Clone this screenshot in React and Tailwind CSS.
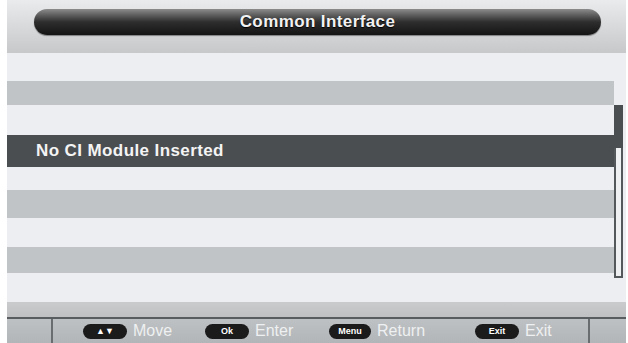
const rows = [
  { h: 'h-[28px]', tone: 'light' },
  { h: 'h-[24px]', tone: 'gray' },
  { h: 'h-[30px]', tone: 'light' },
  { h: 'h-[32px]', tone: 'dark', label: 'No CI Module Inserted' },
  { h: 'h-[23px]', tone: 'light' },
  { h: 'h-[28px]', tone: 'gray' },
  { h: 'h-[29px]', tone: 'light' },
  { h: 'h-[26px]', tone: 'gray' },
  { h: 'h-[29px]', tone: 'light' },
];

const toneClass = {
  light: 'bg-[#eceef1]',
  gray: 'bg-[#c1c4c7]',
  dark: 'bg-[#4b4e51]',
};

function Key({ label, width }) {
  return (
    <span
      className={`${width} h-[15px] rounded-full bg-[#1b1b1b] flex items-center justify-center text-[9px] font-bold text-white leading-none`}
    >
      {label}
    </span>
  );
}

function Hint({ keyLabel, keyWidth, text, width }) {
  return (
    <div className={`${width} flex items-center gap-[6px]`}>
      <Key label={keyLabel} width={keyWidth} />
      <span className="text-[16px] text-[#eef0f1] leading-none">{text}</span>
    </div>
  );
}

export default function App() {
  return (
    <div
      className="w-[628px] h-[343px] bg-white overflow-hidden flex"
      style={{ fontFamily: '"Liberation Sans", Arial, sans-serif' }}
    >
      <div className="ml-[7px] mr-[2px] flex-1 flex flex-col">
        {/* title bar */}
        <div className="h-[53px] bg-linear-to-b from-[#eaebec] to-[#c6c8ca] pl-[27px] pr-[25px] pt-[9px]">
          <div className="h-[26px] rounded-full bg-linear-to-b from-[#8c8c8c] via-[#2e2e2e] to-[#141414] shadow-[0_1px_1px_rgba(0,0,0,0.4)] flex items-center justify-center">
            <span className="text-[17px] font-bold text-[#f2f2f2] tracking-[0.4px] [text-shadow:0_1px_1px_#000]">
              Common Interface
            </span>
          </div>
        </div>

        {/* list + scrollbar */}
        <div className="flex">
          <div className="flex-1 flex flex-col">
            {rows.map((r, i) => (
              <div key={i} className={`${r.h} ${toneClass[r.tone]} flex items-center pl-[29px]`}>
                {r.label && (
                  <span className="text-[17px] font-bold text-[#f4f4f4] tracking-[0.4px]">{r.label}</span>
                )}
              </div>
            ))}
          </div>
          <div className="w-[12px] bg-[#eceef1] pt-[52px]">
            <div className="w-[9px] h-[43px] bg-[#4b4e51]" />
            <div className="w-[9px] h-[130px] border-2 border-t-0 border-[#55585b] bg-[#eef0f2]" />
          </div>
        </div>

        {/* footer */}
        <div className="h-[15px] bg-linear-to-b from-[#c9cbcd] to-[#bfc1c3]" />
        <div className="flex-1 flex border-t-2 border-[#5a5d60] bg-linear-to-b from-[#bec1c3] to-[#b2b5b8]">
          <div className="w-[46px] border-r-2 border-[#6a6d70]" />
          <div className="flex-1 flex items-center pl-[30px]">
            <Hint keyLabel="▲▼" keyWidth="w-[44px]" text="Move" width="w-[122px]" />
            <Hint keyLabel="Ok" keyWidth="w-[44px]" text="Enter" width="w-[124px]" />
            <Hint keyLabel="Menu" keyWidth="w-[42px]" text="Return" width="w-[146px]" />
            <Hint keyLabel="Exit" keyWidth="w-[44px]" text="Exit" width="w-[100px]" />
          </div>
          <div className="w-[38px] border-l-2 border-[#6a6d70]" />
        </div>
      </div>
    </div>
  );
}
